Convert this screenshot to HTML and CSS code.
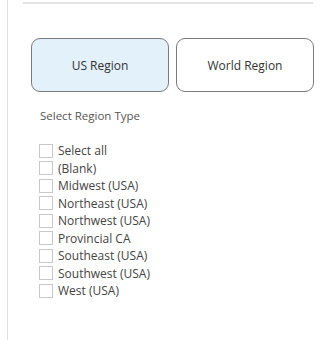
FILE: index.html
```html
<!DOCTYPE html>
<html lang="en">
<head>
    <meta charset="UTF-8">
    <meta name="viewport" content="width=device-width, initial-scale=1.0">
    <title>Region Filter</title>
    <link rel="stylesheet" href="styles.css">
</head>
<body>
    <div class="panel">
        <div class="topline"></div>

        <div class="buttons">
            <button class="region active">US Region</button>
            <button class="region">World Region</button>
        </div>

        <div class="slicer">
            <div class="slicer-title">Select Region Type</div>
            <ul class="items">
                <li><span class="box"></span>Select all</li>
                <li><span class="box"></span>(Blank)</li>
                <li><span class="box"></span>Midwest (USA)</li>
                <li><span class="box"></span>Northeast (USA)</li>
                <li><span class="box"></span>Northwest (USA)</li>
                <li><span class="box"></span>Provincial CA</li>
                <li><span class="box"></span>Southeast (USA)</li>
                <li><span class="box"></span>Southwest (USA)</li>
                <li><span class="box"></span>West (USA)</li>
            </ul>
        </div>
    </div>
</body>
</html>
```

FILE: styles.css
```css
body {
    margin: 0;
    background: #fff;
    font-family: "Open Sans", "Noto Sans", Arial, sans-serif;
    color: #252423;
}
.panel {
    margin-left: 7px;
    height: 340px;
    border-left: 1px solid #e1e1e1;
    box-sizing: border-box;
    padding-top: 2px;
}
.topline {
    margin-left: 15px;
    width: 290px;
    height: 2px;
    background: #e3e3e3;
}
.buttons {
    display: flex;
    gap: 7px;
    margin: 34px 0 0 23px;
}
.region {
    width: 138px;
    height: 54px;
    border: 1px solid #7a7a7a;
    border-radius: 9px;
    background: #fff;
    font-family: inherit;
    font-size: 12px;
    color: #333;
    padding: 0;
}
.region.active {
    background: #e3f1fb;
}
.slicer {
    margin: 16px 0 0 31px;
}
.slicer-title {
    font-size: 11.5px;
    color: #555;
    height: 16px;
    padding-left: 1px;
}
.items {
    list-style: none;
    margin: 18px 0 0 0;
    padding: 0;
}
.items li {
    display: flex;
    align-items: center;
    height: 17.5px;
    font-size: 12px;
    color: #444;
}
.box {
    width: 12px;
    height: 12px;
    border: 1px solid #c8c8c8;
    margin-right: 5px;
    flex: none;
}
```
